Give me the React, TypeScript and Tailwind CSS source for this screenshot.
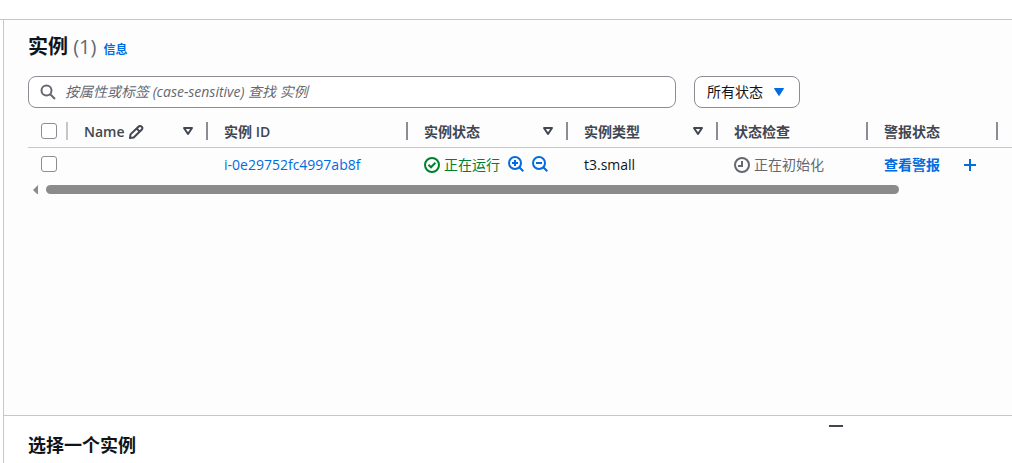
import React, { useState } from "react";

function SearchIcon() {
  return (
    <svg className="size-4 shrink-0" viewBox="0 0 16 16" fill="none" stroke="#656871" strokeWidth="2" aria-hidden="true">
      <circle cx="6.5" cy="6.5" r="5" />
      <path d="M10.2 10.2 15 15" />
    </svg>
  );
}

function EditIcon() {
  return (
    <svg className="size-4 shrink-0" viewBox="0 0 16 16" fill="none" stroke="#424650" strokeWidth="2" strokeLinejoin="round" aria-hidden="true">
      <path d="M2 14l.5-3.600L10.400 2.700c1-1 2.300-1 3.200-.1l.1.100c.9.900.8 2.100-.1 3.100L5.700 13.500z" />
      <path d="M8.600 4.500l3.100 3.100" />
    </svg>
  );
}

function SortIcon() {
  return (
    <svg className="size-4" viewBox="0 0 16 16" fill="none" stroke="#424650" strokeWidth="2" strokeLinejoin="round" aria-hidden="true">
      <path d="M4 5h8l-4 6z" />
    </svg>
  );
}

function SuccessIcon() {
  return (
    <svg className="size-4 shrink-0" viewBox="0 0 16 16" fill="none" stroke="#00802f" strokeWidth="2" aria-hidden="true">
      <circle cx="8" cy="8" r="7" />
      <path d="M4.500 7.800 7 10.300l4.400-4.500" />
    </svg>
  );
}

function PendingIcon() {
  return (
    <svg className="size-4 shrink-0" viewBox="0 0 16 16" fill="none" stroke="#656871" strokeWidth="2" aria-hidden="true">
      <circle cx="8" cy="8" r="7" />
      <path d="M8 4v5H4" />
    </svg>
  );
}

function ZoomIcon({ plus = false }: { plus?: boolean }) {
  return (
    <svg className="size-4" viewBox="0 0 16 16" fill="none" stroke="#006ce0" strokeWidth="2" aria-hidden="true">
      <circle cx="7" cy="7" r="6" />
      <path d="M11.300 11.300 15.300 15.300M4 7h6" />
      {plus && <path d="M7 4v6" />}
    </svg>
  );
}

function Tick({ label }: { label: string }) {
  return (
    <input
      type="checkbox"
      aria-label={label}
      className="block size-4 appearance-none rounded-[3px] border border-[#8c8c94] bg-white checked:bg-[#006ce0]"
    />
  );
}

type Column = { label: string; sortable?: boolean; editable?: boolean };

const columns: Column[] = [
  { label: "Name", sortable: true, editable: true },
  { label: "实例 ID" },
  { label: "实例状态", sortable: true },
  { label: "实例类型", sortable: true },
  { label: "状态检查" },
  { label: "警报状态" },
];

function HeaderCell({ label, sortable, editable }: Column) {
  return (
    <th scope="col" className="p-0 font-semibold">
      <div className="flex h-[18px] items-center border-r-2 border-[#8c8c94] pr-[10px] pl-4">
        <span className="flex items-center gap-[3px] pt-0.5 whitespace-nowrap">
          {label}
          {editable && <EditIcon />}
        </span>
        {sortable && (
          <button type="button" aria-label={`排序 ${label}`} className="ml-auto">
            <SortIcon />
          </button>
        )}
      </div>
    </th>
  );
}

export default function App() {
  const [query, setQuery] = useState("");

  return (
    <div className="flex min-h-screen flex-col bg-white font-['Open_Sans','Noto_Sans_CJK_SC',sans-serif] text-sm leading-5 text-[#0f141a]">
      <div className="h-5 border-b border-[#c6c6cd]" />
      <main className="ml-[3px] flex flex-1 flex-col border-l border-[#c6c6cd]">
        <section className="flex-1 bg-[#fdfdfd] pt-[13px] pl-6">
          <header className="flex items-baseline">
            <h1 className="text-xl leading-7 font-bold">
              实例 <span className="font-normal text-[#656871]">(1)</span>
            </h1>
            <a href="#info" className="ml-[7px] text-xs font-bold text-[#006ce0]">
              信息
            </a>
          </header>

          <div className="mt-[15px] flex gap-[18px] pr-6">
            <label className="flex h-8 max-w-[648px] flex-1 items-center gap-[9px] rounded-lg border border-[#8c8c94] bg-white px-[11px]">
              <SearchIcon />
              <input
                type="text"
                aria-label="查找实例"
                value={query}
                onChange={(e) => setQuery(e.target.value)}
                placeholder="按属性或标签 (case-sensitive) 查找 实例"
                className="min-w-0 flex-1 bg-transparent outline-none placeholder:text-[#656871] placeholder:italic"
              />
            </label>
            <div className="relative">
              <select
                aria-label="实例状态筛选"
                className="h-8 w-[106px] appearance-none rounded-lg border border-[#8c8c94] bg-white pr-8 pl-3"
              >
                <option>所有状态</option>
              </select>
              <svg className="pointer-events-none absolute top-2 right-[13px] size-4" viewBox="0 0 16 16" fill="#006ce0" stroke="#006ce0" strokeLinejoin="round" aria-hidden="true">
                <path d="M3.500 4.500h9L8 11.500z" />
              </svg>
            </div>
          </div>

          <div className="mt-2 overflow-hidden">
            <table className="w-full table-fixed border-collapse text-left">
              <colgroup>
                <col className="w-10" />
                <col className="w-[140px]" />
                <col className="w-[200px]" />
                <col className="w-[160px]" />
                <col className="w-[150px]" />
                <col className="w-[150px]" />
                <col className="w-[130px]" />
                <col />
              </colgroup>
              <thead>
                <tr className="h-[31px] border-b border-[#c6c6cd] text-[#424650]">
                  <th scope="col" className="p-0">
                    <div className="flex h-[18px] items-center border-r-2 border-[#c6c6cd] pl-[13px]">
                      <Tick label="全选" />
                    </div>
                  </th>
                  {columns.map((column) => (
                    <HeaderCell key={column.label} {...column} />
                  ))}
                  <td className="p-0" />
                </tr>
              </thead>
              <tbody>
                <tr className="h-[34px] whitespace-nowrap">
                  <td className="p-0 pl-[13px]">
                    <Tick label="选择 i-0e29752fc4997ab8f" />
                  </td>
                  <td className="p-0" />
                  <td className="p-0 pt-0.5 pl-4">
                    <a href="#instance" className="text-[#006ce0]">
                      i-0e29752fc4997ab8f
                    </a>
                  </td>
                  <td className="p-0 pt-0.5 pl-4">
                    <div className="flex items-center">
                      <span className="flex items-center gap-1 text-[#00802f]">
                        <SuccessIcon />
                        正在运行
                      </span>
                      <button type="button" aria-label="筛选此状态" className="ml-2 pb-0.5">
                        <ZoomIcon plus />
                      </button>
                      <button type="button" aria-label="排除此状态" className="ml-2 pb-0.5">
                        <ZoomIcon />
                      </button>
                    </div>
                  </td>
                  <td className="p-0 pt-0.5 pl-4">t3.small</td>
                  <td className="p-0 pt-0.5 pl-4">
                    <span className="flex items-center gap-1 text-[#656871]">
                      <PendingIcon />
                      正在初始化
                    </span>
                  </td>
                  <td className="p-0 pt-0.5 pl-4">
                    <div className="flex items-center gap-[22px]">
                      <a href="#alarms" className="font-bold text-[#006ce0]">
                        查看警报
                      </a>
                      <button type="button" aria-label="添加警报">
                        <svg className="size-4" viewBox="0 0 16 16" fill="none" stroke="#006ce0" strokeWidth="2" aria-hidden="true">
                          <path d="M8 2v12M2 8h12" />
                        </svg>
                      </button>
                    </div>
                  </td>
                  <td className="p-0" />
                </tr>
              </tbody>
            </table>
            <div className="mt-1 flex h-[9px] items-center gap-2 pl-1">
              <svg className="h-[10px] w-[6px]" viewBox="0 0 6 10" fill="#8b8b8b" aria-hidden="true">
                <path d="M6 0v10L1 5z" />
              </svg>
              <div className="h-[9px] w-[87%] rounded-full bg-[#8b8b8b]" />
            </div>
          </div>
        </section>

        <section className="flex h-12 border-t border-[#c6c6cd] bg-white pl-6">
          <h2 className="mt-[17px] flex-1 text-lg leading-6 font-bold">选择一个实例</h2>
          <button type="button" aria-label="折叠面板" className="mt-[9px] mr-[169px] h-[2px] w-[14px] bg-[#424650]" />
        </section>
      </main>
    </div>
  );
}
